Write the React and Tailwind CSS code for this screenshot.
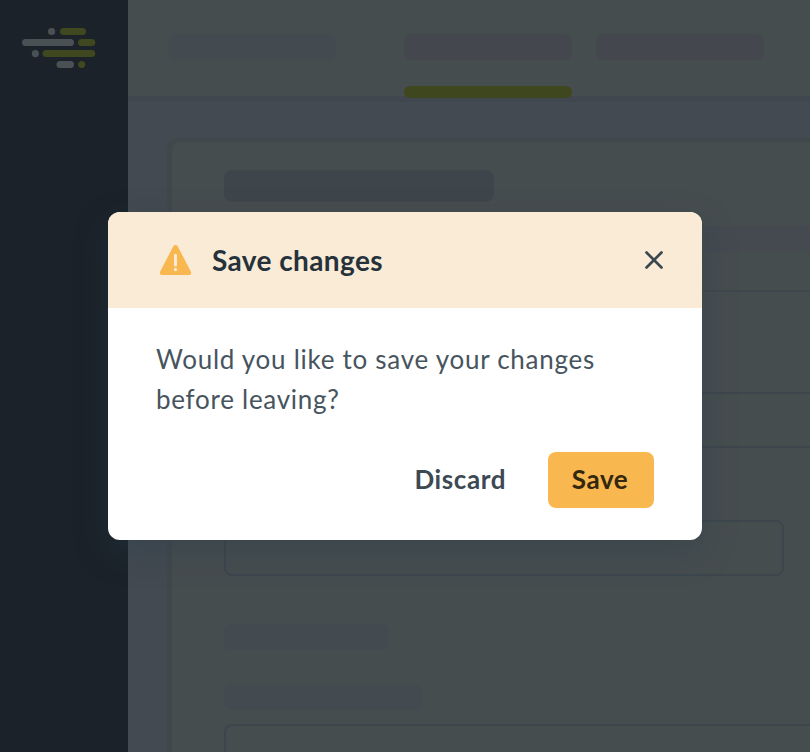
function Logo() {
  return (
    <svg className="ml-[22px] mt-7 block h-10 w-[74px]" viewBox="0 0 74 40">
      <g fill="#495154">
        <circle cx="29.6" cy="3.5" r="3.6" />
        <rect x="0" y="11" width="52" height="7" rx="3.5" />
        <circle cx="13.4" cy="25.6" r="3.6" />
        <rect x="34.5" y="33" width="17.5" height="7" rx="3.5" />
      </g>
      <g fill="#3f481f">
        <rect x="38" y="0" width="26" height="7" rx="3.5" />
        <rect x="56" y="11" width="17.3" height="7" rx="3.5" />
        <rect x="20.5" y="22" width="52.8" height="7" rx="3.5" />
        <circle cx="59.7" cy="36.5" r="3.6" />
      </g>
    </svg>
  );
}

function WarningIcon() {
  return (
    <svg className="-ml-px block h-[30px] w-[33px] shrink-0" viewBox="-0.5 0 33 30">
      <path
        d="M13.7 1.4a2.6 2.6 0 0 1 4.6 0L31.3 26.6c.9 1.8 0 3.4-2.1 3.4H2.8C.7 30-.2 28.4.7 26.6Z"
        fill="#f8b74f"
      />
      <path d="M16 10.2v9.8" stroke="#faebd7" strokeWidth="3" strokeLinecap="round" />
      <circle cx="16" cy="24.6" r="1.7" fill="#faebd7" />
    </svg>
  );
}

function CloseIcon() {
  return (
    <svg className="block h-[18px] w-[18px]" viewBox="0 0 18 18">
      <path
        d="M1.5 1.5l15 15M16.5 1.5l-15 15"
        stroke="#3a4852"
        strokeWidth="2.7"
        strokeLinecap="round"
        fill="none"
      />
    </svg>
  );
}

function Page() {
  return (
    <div className="flex h-full">
      <aside className="w-32 shrink-0 bg-[#1b2229]">
        <Logo />
      </aside>
      <div className="flex min-w-0 flex-1 flex-col bg-[#434a51]">
        <header className="flex h-24 shrink-0 bg-[#464d4f] pl-10 shadow-[0_6px_0_#40474e]">
          <div className="mt-[34px] h-[26px] w-[168px] shrink-0 rounded-lg bg-[#434a50]" />
          <div className="ml-[68px] mt-[34px] flex w-[168px] shrink-0 flex-col gap-[26px]">
            <div className="h-[26px] shrink-0 rounded-lg bg-[#44474e]" />
            <div className="h-3 shrink-0 rounded-full bg-[#3e471e]" />
          </div>
          <div className="ml-6 mt-[34px] h-[26px] w-[168px] shrink-0 rounded-lg bg-[#44474e]" />
        </header>
        <main className="ml-11 mt-[46px] flex flex-1 flex-col rounded-tl-lg bg-[#464d4f] pt-7 shadow-[-1px_0_0_4px_#41484c]">
          <div className="ml-[52px] h-8 w-[270px] shrink-0 rounded-lg bg-[#3f464b]" />
          <div className="mt-6 h-[26px] shrink-0 bg-[#444a50]" />
          <div className="mt-[38px] h-0.5 shrink-0 bg-[#40484f]" />
          <div className="ml-[52px] mt-[100px] h-14 shrink-0 rounded-l-lg border-2 border-r-0 border-[#3d464d]" />
          <div className="ml-[52px] mt-[72px] h-14 w-[560px] shrink-0 rounded-lg border-2 border-[#3d464d]" />
          <div className="ml-[52px] mt-12 h-[26px] w-[164px] shrink-0 rounded-lg bg-[#434a50]" />
          <div className="ml-[52px] mt-[34px] h-[26px] w-[198px] shrink-0 rounded-lg bg-[#434a50]" />
          <div className="ml-[52px] mt-3.5 h-14 shrink-0 rounded-l-lg border-2 border-r-0 border-[#3d464d]" />
        </main>
      </div>
    </div>
  );
}

function SaveDialog() {
  return (
    <div
      role="dialog"
      className="absolute left-[108px] top-[212px] h-[328px] w-[594px] overflow-hidden rounded-xl bg-white shadow-[0_12px_32px_rgba(38,60,76,0.36)]"
    >
      <div className="flex h-24 items-center bg-[#faebd7] pl-[52px] pr-[39px]">
        <WarningIcon />
        <h1 className="ml-5 flex-1 whitespace-nowrap text-[28px] font-bold leading-8 tracking-[0.4px] text-[#25323b]">
          Save changes
        </h1>
        <button aria-label="Close">
          <CloseIcon />
        </button>
      </div>
      <p className="whitespace-nowrap pl-12 pt-[31px] text-[26px] leading-10 tracking-[0.73px] text-[#47545e]">
        Would you like to save your changes
        <br />
        before leaving?
      </p>
      <div className="mt-[33px] flex items-center justify-end pr-12">
        <button className="mr-[42px] pb-0.5 text-[26px] font-bold tracking-[0.6px] text-[#3c4953]">
          Discard
        </button>
        <button className="h-14 w-[106px] rounded-lg bg-[#f8b74f] pb-0.5 pr-0.5 text-[26px] font-bold tracking-[0.6px] text-[#33270f]">
          Save
        </button>
      </div>
    </div>
  );
}

export default function App() {
  return (
    <div className="relative h-[752px] w-[810px] overflow-hidden font-['Lato',sans-serif]">
      <Page />
      <SaveDialog />
    </div>
  );
}
